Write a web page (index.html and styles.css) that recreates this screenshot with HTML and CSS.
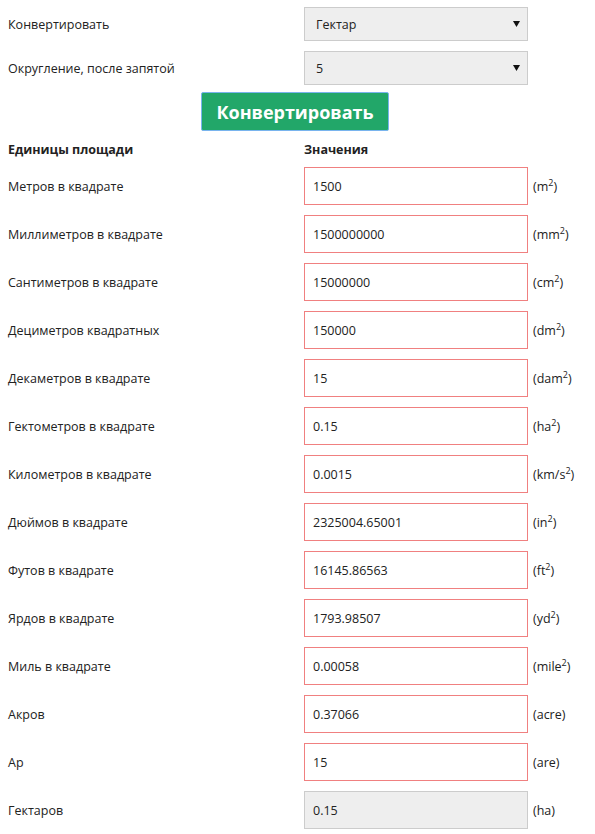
FILE: index.html
```html
<!DOCTYPE html>
<html lang="ru">
<head>
<meta charset="utf-8">
<link rel="stylesheet" href="styles.css">
</head>
<body>
<div class="page">
  <div class="row top">
    <div class="label">Конвертировать</div>
    <div class="select"><span>Гектар</span><svg class="arrow" width="7" height="6" viewBox="0 0 7 6"><path d="M0 0H7L3.5 6Z" fill="#111"/></svg></div>
  </div>
  <div class="row top">
    <div class="label">Округление, после запятой</div>
    <div class="select"><span>5</span><svg class="arrow" width="7" height="6" viewBox="0 0 7 6"><path d="M0 0H7L3.5 6Z" fill="#111"/></svg></div>
  </div>
  <div class="btn-wrap"><button class="btn">Конвертировать</button></div>
  <div class="row head">
    <div class="label">Единицы площади</div>
    <div class="label">Значения</div>
  </div>
  <div class="list">
    <div class="row"><div class="label">Метров в квадрате</div><div class="field">1500</div><div class="unit">(m<sup>2</sup>)</div></div>
    <div class="row"><div class="label">Миллиметров в квадрате</div><div class="field">1500000000</div><div class="unit">(mm<sup>2</sup>)</div></div>
    <div class="row"><div class="label">Сантиметров в квадрате</div><div class="field">15000000</div><div class="unit">(cm<sup>2</sup>)</div></div>
    <div class="row"><div class="label">Дециметров квадратных</div><div class="field">150000</div><div class="unit">(dm<sup>2</sup>)</div></div>
    <div class="row"><div class="label">Декаметров в квадрате</div><div class="field">15</div><div class="unit">(dam<sup>2</sup>)</div></div>
    <div class="row"><div class="label">Гектометров в квадрате</div><div class="field">0.15</div><div class="unit">(ha<sup>2</sup>)</div></div>
    <div class="row"><div class="label">Километров в квадрате</div><div class="field">0.0015</div><div class="unit">(km/s<sup>2</sup>)</div></div>
    <div class="row"><div class="label">Дюймов в квадрате</div><div class="field">2325004.65001</div><div class="unit">(in<sup>2</sup>)</div></div>
    <div class="row"><div class="label">Футов в квадрате</div><div class="field">16145.86563</div><div class="unit">(ft<sup>2</sup>)</div></div>
    <div class="row"><div class="label">Ярдов в квадрате</div><div class="field">1793.98507</div><div class="unit">(yd<sup>2</sup>)</div></div>
    <div class="row"><div class="label">Миль в квадрате</div><div class="field">0.00058</div><div class="unit">(mile<sup>2</sup>)</div></div>
    <div class="row"><div class="label">Акров</div><div class="field">0.37066</div><div class="unit">(acre)</div></div>
    <div class="row"><div class="label">Ар</div><div class="field">15</div><div class="unit">(are)</div></div>
    <div class="row"><div class="label">Гектаров</div><div class="field readonly">0.15</div><div class="unit">(ha)</div></div>
  </div>
</div>
</body>
</html>
```
FILE: styles.css
```css
html, body {
  margin: 0;
  padding: 0;
  background: #fff;
}
body {
  font-family: "Open Sans", "Liberation Sans", sans-serif;
  font-size: 12.5px;
  color: #222;
}
.page {
  padding: 7px 8px 0 8px;
}
.row {
  display: grid;
  grid-template-columns: 296px 224px auto;
  align-items: center;
}
.top {
  height: 34px;
  margin-bottom: 10px;
}
.top + .btn-wrap {
  margin-top: -3px;
}
.select {
  box-sizing: border-box;
  height: 34px;
  background: #eee;
  border: 1px solid #ccc;
  display: flex;
  align-items: center;
  justify-content: space-between;
  padding: 0 7px 0 11px;
}
.arrow {
  display: block;
}
.btn-wrap {
  padding-left: 193px;
}
.btn {
  box-sizing: border-box;
  width: 188px;
  height: 39px;
  background: #22a769;
  border: 1px solid #79b4ee;
  border-radius: 2px;
  color: #fff;
  font-family: "Open Sans", "Liberation Sans", sans-serif;
  font-weight: 700;
  font-size: 18px;
  padding: 0;
  display: block;
}
.head {
  height: 36px;
  font-weight: 700;
}
.list {
  display: flex;
  flex-direction: column;
  gap: 10px;
}
.list .row {
  height: 38px;
}
.field {
  box-sizing: border-box;
  height: 38px;
  border: 1px solid #f08080;
  background: #fff;
  padding: 0 8px;
  display: flex;
  align-items: center;
}
.field.readonly {
  background: #eee;
  border-color: #ccc;
}
.unit {
  padding-left: 5px;
}
sup {
  font-size: 9px;
  vertical-align: 5px;
  line-height: 0;
}
```
